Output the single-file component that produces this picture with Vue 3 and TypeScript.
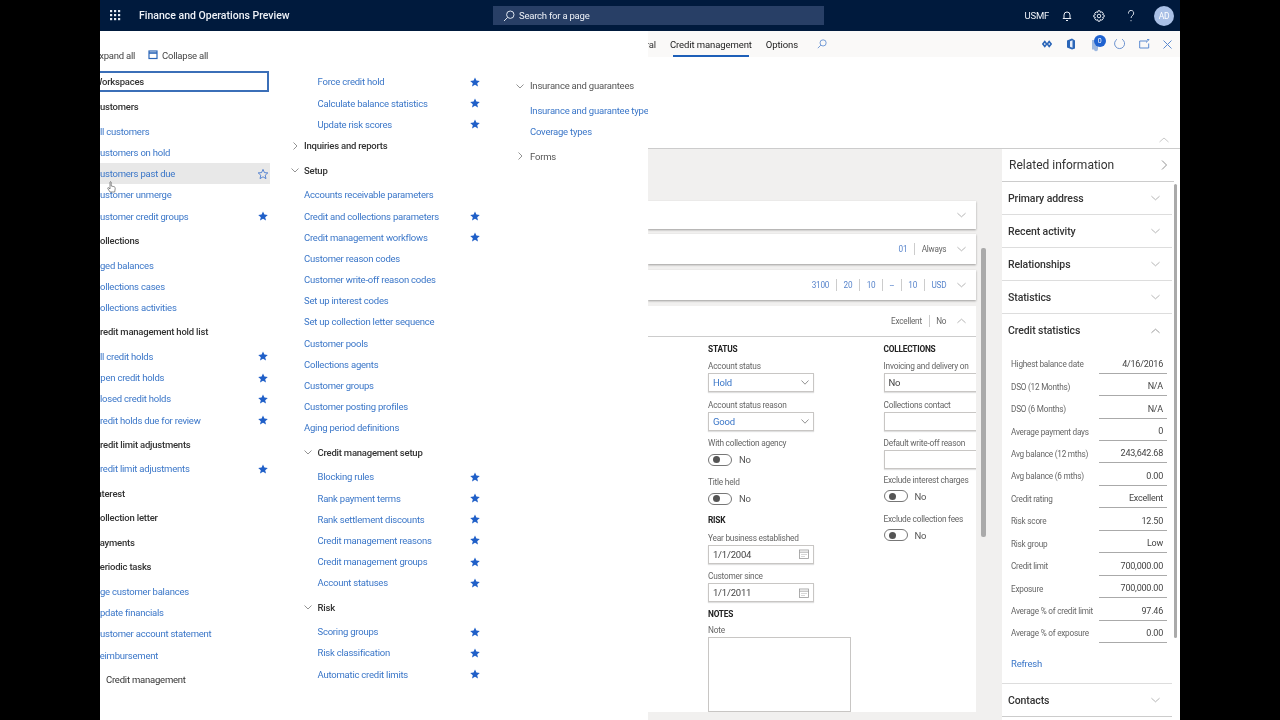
<script setup lang="ts">
type Row = { t: string; k: string; star?: boolean; chev?: string; tight?: boolean; hover?: boolean }
const L = (t: string, star = false): Row => ({ t, k: 'link', star })
const S = (t: string, star = true): Row => ({ t, k: 'link sub', star })
const H = (t: string, chev?: string, tight = false): Row => ({ t, k: 'head', chev, tight })
const SH = (t: string, chev?: string): Row => ({ t, k: 'head subh', chev })

const col1: Row[] = [
  H('Customers'), L('All customers'), L('Customers on hold'),
  { t: 'Customers past due', k: 'link', hover: true },
  L('Customer unmerge'), L('Customer credit groups', true),
  H('Collections'), L('Aged balances'), L('Collections cases'), L('Collections activities'),
  H('Credit management hold list'), L('All credit holds', true), L('Open credit holds', true),
  L('Closed credit holds', true), L('Credit holds due for review', true),
  H('Credit limit adjustments'), L('Credit limit adjustments', true),
  H('Interest'), H('Collection letter'), H('Payments'), H('Periodic tasks'),
  L('Age customer balances'), L('Update financials'), L('Customer account statement'), L('Reimbursement'),
]
const col2: Row[] = [
  S('Force credit hold'), S('Calculate balance statistics'), S('Update risk scores'),
  H('Inquiries and reports', 'r', true), H('Setup', 'd'),
  L('Accounts receivable parameters'), L('Credit and collections parameters', true),
  L('Credit management workflows', true), L('Customer reason codes'), L('Customer write-off reason codes'),
  L('Set up interest codes'), L('Set up collection letter sequence'), L('Customer pools'),
  L('Collections agents'), L('Customer groups'), L('Customer posting profiles'), L('Aging period definitions'),
  SH('Credit management setup', 'd'),
  S('Blocking rules'), S('Rank payment terms'), S('Rank settlement discounts'),
  S('Credit management reasons'), S('Credit management groups'), S('Account statuses'),
  SH('Risk', 'd'), S('Scoring groups'), S('Risk classification'), S('Automatic credit limits'),
]
const col3: Row[] = [
  H('Insurance and guarantees', 'd'), L('Insurance and guarantee types'), L('Coverage types'), H('Forms', 'r'),
]
const panes = ['Primary address', 'Recent activity', 'Relationships', 'Statistics']
const stats: [string, string][] = [
  ['Highest balance date', '4/16/2016'], ['DSO (12 Months)', 'N/A'], ['DSO (6 Months)', 'N/A'],
  ['Average payment days', '0'], ['Avg balance (12 mths)', '243,642.68'], ['Avg balance (6 mths)', '0.00'],
  ['Credit rating', 'Excellent'], ['Risk score', '12.50'], ['Risk group', 'Low'],
  ['Credit limit', '700,000.00'], ['Exposure', '700,000.00'],
  ['Average % of credit limit', '97.46'], ['Average % of exposure', '0.00'],
]
const addr = ['3100', '20', '10', '--', '10', 'USD']
const star = 'M5 .4l1.4 3.2 3.4.3-2.6 2.3.8 3.4L5 7.8 2 9.6l.8-3.4L.2 3.9l3.4-.3z'
</script>

<template>
  <div class="frame">
    <header class="top">
      <svg class="waffle" width="11" height="11" viewBox="0 0 11 11" fill="#e8edf5">
        <template v-for="x in [0, 4, 8]" :key="x">
          <rect v-for="y in [0, 4, 8]" :key="y" :x="x" :y="y" width="2.2" height="2.2" />
        </template>
      </svg>
      <span class="brand">Finance and Operations Preview</span>
      <div class="search">
        <svg width="12" height="12" viewBox="0 0 12 12" fill="none" stroke="#dfe6f0" stroke-width="1"><circle cx="7.3" cy="4.7" r="3.7" /><path d="M4.6 7.4L1 11" /></svg>
        <span>Search for a page</span>
      </div>
      <div class="topright">
        <span class="co">USMF</span>
        <svg width="12" height="12" viewBox="0 0 12 12" fill="none" stroke="#e8edf5"><path d="M3 8.5V5a3 3 0 016 0v3.5zM1.8 8.5h8.4M5 10.5h2" /></svg>
        <svg width="12" height="12" viewBox="0 0 12 12" fill="none" stroke="#e8edf5"><circle cx="6" cy="6" r="1.8" /><path d="M5 .8h2l.4 1.6 1.5-.6 1.4 1.4-.7 1.4 1.6.5v1.8l-1.6.5.7 1.4-1.4 1.4-1.5-.6-.4 1.6H5l-.4-1.6-1.5.6-1.4-1.4.7-1.4L.8 7V5.2l1.6-.5-.7-1.4 1.4-1.4 1.5.6z" /></svg>
        <svg width="12" height="12" viewBox="0 0 12 12" fill="none" stroke="#e8edf5"><path d="M3.5 3.5a2.6 2.6 0 115 .4c0 1.5-2.4 1.9-2.4 4M6 10.2v1" /></svg>
        <span class="avatar">AD</span>
      </div>
    </header>

    <div class="body">
      <nav class="nav">
        <div class="tools">
          <span class="expand">Expand all</span>
          <svg width="10" height="10" viewBox="0 0 10 10" fill="none" stroke="#2b66b8" stroke-width="1.2"><rect x="1" y="1" width="8" height="7.5" /><path d="M1 3h8" stroke-width="1.6" /></svg>
          <span>Collapse all</span>
        </div>
        <div class="cols">
          <div class="col col1">
            <div class="ws"><span class="out">Workspaces</span></div>
            <div v-for="r in col1" :key="r.t" class="row" :class="[r.k, { hover: r.hover }]">
              <span class="out">{{ r.t }}</span>
              <svg v-if="r.star || r.hover" class="star" width="10" height="10" viewBox="0 0 10 10" :fill="r.hover ? 'none' : '#1f5fc8'" stroke="#1f5fc8" :stroke-width="r.hover ? 0.7 : 0"><path :d="star" /></svg>
              <svg v-if="r.hover" class="hand" width="9" height="12" viewBox="0 0 9 12" fill="#fff" stroke="#444" stroke-width=".6"><path d="M3 1c.5-.6 1.200-.3 1.200.4V5l2.600.6c1 .2 1.600 1 1.400 2L7.700 11H3L.8 7.600c-.4-.7.3-1.300.9-.8L3 8z" /></svg>
            </div>
            <div class="row head last">Credit management</div>
          </div>
          <div class="col col2">
            <div v-for="r in col2" :key="r.t" class="row" :class="[r.k, { tight: r.tight }]">
              <svg v-if="r.chev" class="chev" width="8" height="8" viewBox="0 0 8 8" fill="none" stroke="#777" stroke-width=".8"><path :d="r.chev === 'r' ? 'M2.5 .5L6 4 2.5 7.5' : 'M.5 2.5L4 6l3.5-3.5'" /></svg>
              <span>{{ r.t }}</span>
              <svg v-if="r.star" class="star" width="10" height="10" viewBox="0 0 10 10" fill="#1f5fc8"><path :d="star" /></svg>
            </div>
          </div>
          <div class="col col3">
            <div v-for="r in col3" :key="r.t" class="row" :class="r.k">
              <svg v-if="r.chev" class="chev" width="8" height="8" viewBox="0 0 8 8" fill="none" stroke="#777" stroke-width=".8"><path :d="r.chev === 'r' ? 'M2.5 .5L6 4 2.5 7.5' : 'M.5 2.5L4 6l3.5-3.5'" /></svg>
              <span>{{ r.t }}</span>
            </div>
          </div>
        </div>
      </nav>

      <main class="main">
        <div class="actions">
          <div class="tabs">
            <span class="tab-clip"><span>General</span></span>
            <span class="tab on">Credit management</span>
            <span class="tab">Options</span>
            <svg class="tabsearch" width="10" height="10" viewBox="0 0 12 12" fill="none" stroke="#5b8ad0"><circle cx="7.3" cy="4.7" r="3.7" /><path d="M4.6 7.4L1 11" /></svg>
          </div>
          <div class="acticons">
            <svg width="10" height="8" viewBox="0 0 10 8" fill="none" stroke="#2b66b8" stroke-width="1.6"><path d="M2.8 1.5L.9 4l1.9 2.5L4.7 4zM7.2 1.5L5.3 4l1.9 2.5L9.1 4z" /></svg>
            <svg class="office" width="10" height="12" viewBox="0 0 10 12"><path d="M6 .5L1 2.500v7l5 2 3-1v-8z" fill="#2b66b8" /><path d="M4 3.200L6.500 2.300v7.400L4 8.800z" fill="#e7eefa" /></svg>
            <span class="chat">
              <svg width="12" height="15" viewBox="0 0 12 15"><path d="M2 3h6v9a2 2 0 01-4 .5H2z" fill="#9db8e0" /></svg>
              <b>0</b>
            </span>
            <svg width="12" height="12" viewBox="0 0 12 12" fill="none" stroke="#6c93d0"><path d="M4 1.300a5 5 0 105-.1" /></svg>
            <svg width="11" height="10" viewBox="0 0 11 10" fill="none" stroke="#5b8ad0"><path d="M8 2H.7v7h9V4.500M7 3.500L10 .6M8 .6h2.300" /></svg>
            <svg width="9" height="9" viewBox="0 0 9 9" fill="none" stroke="#5b8ad0"><path d="M.5.500l8 8M8.500.500l-8 8" /></svg>
          </div>
        </div>
        <div class="banner">
          <svg width="10" height="6" viewBox="0 0 10 6" fill="none" stroke="#bbb" stroke-width=".8"><path d="M.5 5L5 1l4.500 4" /></svg>
        </div>
        <div class="content">
          <div class="area">
            <section class="card c1"><svg class="cv" width="9" height="6" viewBox="0 0 10 6" fill="none" stroke="#999" stroke-width=".8"><path d="M.5 1L5 5l4.500-4" /></svg></section>
            <section class="card">
              <span class="sum blue">01</span><span class="sum">Always</span>
              <svg class="cv" width="9" height="6" viewBox="0 0 10 6" fill="none" stroke="#999" stroke-width=".8"><path d="M.5 1L5 5l4.500-4" /></svg>
            </section>
            <section class="card">
              <span v-for="(a, i) in addr" :key="i" class="sum blue">{{ a }}</span>
              <svg class="cv" width="9" height="6" viewBox="0 0 10 6" fill="none" stroke="#999" stroke-width=".8"><path d="M.5 1L5 5l4.500-4" /></svg>
            </section>
            <section class="card open">
              <div class="openhead">
                <span class="sum">Excellent</span><span class="sum">No</span>
                <svg class="cv" width="9" height="6" viewBox="0 0 10 6" fill="none" stroke="#999" stroke-width=".8"><path d="M.5 5L5 1l4.500 4" /></svg>
              </div>
              <div class="form">
                <div class="fc1">
                  <h4>STATUS</h4>
                  <label>Account status</label>
                  <div class="ctl blue">Hold<svg width="8" height="5" viewBox="0 0 8 5" fill="none" stroke="#777" stroke-width=".8"><path d="M.5.500L4 4.200 7.500.500" /></svg></div>
                  <label>Account status reason</label>
                  <div class="ctl blue">Good<svg width="8" height="5" viewBox="0 0 8 5" fill="none" stroke="#777" stroke-width=".8"><path d="M.5.500L4 4.200 7.500.500" /></svg></div>
                  <label>With collection agency</label>
                  <div class="tg"><i></i><span>No</span></div>
                  <label>Title held</label>
                  <div class="tg"><i></i><span>No</span></div>
                  <h4 class="risk">RISK</h4>
                  <label>Year business established</label>
                  <div class="ctl">1/1/2004<svg width="10" height="10" viewBox="0 0 10 10" fill="none" stroke="#999" stroke-width=".8"><rect x=".5" y="1" width="9" height="8.500" /><path d="M.5 3.200h9M2.500 5.500h1M4.500 5.500h1M6.500 5.500h1M2.500 7.500h1M4.500 7.500h1" /></svg></div>
                  <label>Customer since</label>
                  <div class="ctl">1/1/2011<svg width="10" height="10" viewBox="0 0 10 10" fill="none" stroke="#999" stroke-width=".8"><rect x=".5" y="1" width="9" height="8.500" /><path d="M.5 3.200h9M2.500 5.500h1M4.500 5.500h1M6.500 5.500h1M2.500 7.500h1M4.500 7.500h1" /></svg></div>
                  <h4 class="notes">NOTES</h4>
                  <label class="notel">Note</label>
                  <div class="note"></div>
                </div>
                <div class="fc2">
                  <h4>COLLECTIONS</h4>
                  <label class="clip">Invoicing and delivery on hold</label>
                  <div class="ctl wide">No</div>
                  <label>Collections contact</label>
                  <div class="ctl wide"></div>
                  <label>Default write-off reason</label>
                  <div class="ctl wide"></div>
                  <label class="ex">Exclude interest charges</label>
                  <div class="tg"><i></i><span>No</span></div>
                  <label class="ex2">Exclude collection fees</label>
                  <div class="tg"><i></i><span>No</span></div>
                </div>
              </div>
            </section>
            <div class="scroll1"></div>
          </div>
          <aside class="side">
            <div class="sidehead"><span>Related information</span><svg width="6" height="10" viewBox="0 0 6 10" fill="none" stroke="#777" stroke-width=".8"><path d="M1 .5L5.500 5 1 9.500" /></svg></div>
            <div v-for="p in panes" :key="p" class="pane"><span>{{ p }}</span><svg width="9" height="6" viewBox="0 0 10 6" fill="none" stroke="#999" stroke-width=".8"><path d="M.5 1L5 5l4.500-4" /></svg></div>
            <div class="pane noline"><span>Credit statistics</span><svg width="9" height="6" viewBox="0 0 10 6" fill="none" stroke="#777" stroke-width=".8"><path d="M.5 5L5 1l4.500 4" /></svg></div>
            <div class="stats">
              <div v-for="s in stats" :key="s[0]" class="stat"><span>{{ s[0] }}</span><b>{{ s[1] }}</b></div>
              <a class="refresh">Refresh</a>
            </div>
            <div class="pane contacts"><span>Contacts</span><svg width="9" height="6" viewBox="0 0 10 6" fill="none" stroke="#999" stroke-width=".8"><path d="M.5 1L5 5l4.500-4" /></svg></div>
            <div class="scroll2"></div>
          </aside>
        </div>
      </main>
    </div>
  </div>
</template>

<style>
html, body { background: #000; margin: 0; }
</style>

<style scoped>
.frame { width: 1080px; height: 720px; margin: 0 auto; background: #fff; overflow: hidden; display: flex; flex-direction: column; font-family: Roboto, "Liberation Sans", sans-serif; font-size: 9.5px; letter-spacing: -.22px; color: #333; filter: blur(.35px); }
.top { height: 31px; flex: none; background: #001a3d; display: flex; align-items: center; color: #eef2f8; }
.waffle { margin-left: 10px; }
.brand { margin-left: 18px; font-size: 10.5px; font-weight: 500; letter-spacing: 0; width: 354px; flex: none; white-space: nowrap; }
.search { width: 331px; height: 19px; background: #283f66; display: flex; align-items: center; gap: 4px; padding-left: 10px; box-sizing: border-box; }
.topright { margin-left: auto; display: flex; align-items: center; gap: 20px; padding-right: 6px; }
.co { font-size: 9.5px; margin-right: -8px; }
.avatar { width: 20px; height: 20px; border-radius: 50%; background: #a9c0e6; color: #fff; font-size: 8.5px; display: flex; align-items: center; justify-content: center; margin-left: -3px; }
.body { flex: 1; display: flex; min-height: 0; }
.nav { width: 548px; flex: none; overflow: hidden; padding-top: 14px; box-sizing: border-box; }
.tools { height: 20px; display: flex; align-items: center; margin-bottom: 6.4px; color: #444; }
.expand { margin-left: -6px; width: 54px; flex: none; }
.tools svg { margin-right: 4px; }
.cols { display: flex; align-items: flex-start; }
.col { flex: none; }
.col1 { width: 170px; }
.col2 { width: 195px; margin-left: 20px; }
.col3 { width: 133px; margin-left: 30px; padding-top: 2.25px; overflow: hidden; }
.row { display: flex; align-items: center; white-space: nowrap; position: relative; }
.link { height: 21.2px; color: #3a76c8; }
.head { height: 24.5px; color: #333; font-weight: 500; }
.link + .head, .head + .link { margin-top: 1.65px; }
.head.tight { margin-top: -1.35px; }
.out { margin-left: -6px; }
.ws { height: 21px; box-sizing: border-box; border: 2px solid #3b6fb8; border-left: 0; margin-right: 1.5px; display: flex; align-items: center; margin-bottom: 2.25px; font-weight: 500; }
.col1 .star { position: absolute; left: 158px; top: 50%; margin-top: -5px; }
.hover { background: #e8e8e8; }
.hand { position: absolute; left: 6.5px; top: 18px; z-index: 1; }
.last { padding-left: 6px; font-weight: 400; }
.col2 .row, .col3 .row { padding-left: 14px; }
.col2 .sub { padding-left: 27.5px; }
.col2 .subh { padding-left: 27.5px; }
.col3 .row { padding-left: 15px; color: #3a76c8; }
.col3 .head { color: #555; font-weight: 400; }
.col2 .star { position: absolute; left: 180px; top: 50%; margin-top: -5px; }
.chev { position: absolute; left: 1px; top: 50%; margin-top: -4px; }
.subh .chev { left: 14px; }
.main { flex: 1; min-width: 0; display: flex; flex-direction: column; }
.actions { height: 26px; flex: none; background: #faf9f8; display: flex; align-items: center; justify-content: space-between; }
.tabs { display: flex; align-items: center; height: 100%; letter-spacing: -.1px; padding-top: 1px; box-sizing: border-box; }
.tab-clip { width: 8px; overflow: hidden; display: flex; justify-content: flex-end; white-space: nowrap; margin-right: 14px; }
.tab { height: 100%; display: flex; align-items: center; position: relative; color: #222; margin-right: 14px; }
.tabsearch { margin-left: 5px; margin-top: -2px; }
.tab.on::after { content: ""; position: absolute; left: 3px; right: 3px; bottom: .5px; height: 2px; background: #1d5fb8; }
.acticons { display: flex; align-items: center; gap: 13.5px; padding-right: 8px; }
.office { margin-left: 1px; }
.chat { position: relative; width: 12px; height: 15px; margin-right: -2px; }
.chat b { position: absolute; left: 4px; top: -2px; width: 12px; height: 12px; border-radius: 50%; background: #1f62d0; color: #fff; font-size: 7px; font-weight: 400; display: flex; align-items: center; justify-content: center; }
.banner { height: 92px; flex: none; box-sizing: border-box; border-bottom: 1px solid #ccc; background: #fff; display: flex; align-items: flex-end; justify-content: flex-end; padding: 0 11px 5px 0; }
.content { flex: 1; display: flex; min-height: 0; }
.area { flex: 1; min-width: 0; background: #f1f0ef; padding: 52px 26px 0 0; position: relative; display: flex; flex-direction: column; overflow: hidden; }
.card { background: #fff; box-shadow: 0 1px 2px rgba(0, 0, 0, .35); height: 30px; margin-bottom: 6px; flex: none; display: flex; align-items: center; justify-content: flex-end; padding-right: 10px; color: #666; font-size: 8.2px; }
.card.c1 { height: 28px; margin-bottom: 5px; }
.cv { margin-left: 4px; }
.sum { padding: 0 6.7px; border-left: 1px solid #ccc; line-height: 12px; }
section > .sum:first-of-type, .openhead > .sum:first-of-type { border-left: 0; }
.sum.blue { color: #5a86cc; }
.card.open { height: 406px; display: block; padding: 0; box-shadow: none; margin: 0; overflow: hidden; }
.openhead { height: 30px; display: flex; align-items: center; justify-content: flex-end; padding-right: 10px; border-bottom: 1px solid #ccc; }
.form { display: flex; padding: 6px 0 0 60px; font-size: 8.3px; color: #666; }
.fc1 { width: 175.5px; flex: none; }
.fc2 { flex: 1; white-space: nowrap; }
h4 { margin: 0 0 4px; font-size: 8.3px; font-weight: 700; color: #222; height: 12px; line-height: 12px; }
label { display: block; height: 14px; line-height: 14px; white-space: nowrap; }
label.clip { width: 87.5px; overflow: hidden; }
.ctl { width: 106px; height: 19px; box-sizing: border-box; border: 1px solid #c8c6c4; box-shadow: 0 1px 1px rgba(0, 0, 0, .12); padding: 0 4px; margin-bottom: 5.5px; display: flex; align-items: center; justify-content: space-between; font-size: 9.5px; color: #444; }
.ctl.blue { color: #3a76c8; }
.ctl.wide { width: 130px; }
.tg { height: 19.5px; margin-bottom: 5.5px; display: flex; align-items: center; font-size: 9.5px; gap: 7px; color: #555; }
.tg i { width: 24px; height: 12px; border: 1px solid #777; border-radius: 7px; box-sizing: border-box; position: relative; }
.tg i::after { content: ""; position: absolute; left: 4px; top: 1.5px; width: 7px; height: 7px; border-radius: 50%; background: #555; }
.risk { margin: 0 0 4.5px; }
.notes { margin: 3px 0 3px; }
.note { width: 143px; height: 75.5px; box-sizing: border-box; border: 1px solid #c8c6c4; }
.ex { margin-top: -2px; }
.ex2 { margin-top: 2px; }
.scroll1 { position: absolute; left: 333px; top: 99px; width: 5px; height: 289px; background: #aaa; border-radius: 2px; }
.side { width: 178px; flex: none; background: #fff; position: relative; overflow: hidden; }
.sidehead { height: 33px; box-sizing: border-box; display: flex; align-items: center; justify-content: space-between; padding: 0 7px 0 7px; border-bottom: 1px solid #ccc; margin-right: 6px; font-size: 12px; letter-spacing: 0; color: #333; }
.pane { height: 33px; box-sizing: border-box; display: flex; align-items: center; justify-content: space-between; padding: 0 12px 0 6px; border-bottom: 1px solid #ddd; margin-right: 8px; font-size: 10.5px; letter-spacing: -.1px; font-weight: 500; color: #333; }
.pane svg { margin-right: .5px; }
.noline { border-bottom: 0; }
.stats { padding: 6px 12px 0 9px; font-size: 8.2px; color: #666; height: 337px; box-sizing: border-box; border-bottom: 1px solid #ddd; margin-right: 8px; }
.stat { height: 22.45px; display: flex; justify-content: space-between; align-items: center; position: relative; white-space: nowrap; }
.stat b { font-weight: 400; color: #444; font-size: 9px; width: 68px; flex: none; box-sizing: border-box; text-align: right; padding-right: 4px; border-bottom: 1px solid #aaa; margin-right: -7px; height: 19px; line-height: 19px; }
.refresh { display: block; margin-top: 9px; color: #3a76c8; font-size: 9.5px; height: 20px; line-height: 20px; }
.contacts { border-bottom: 1px solid #ccc; }
.scroll2 { position: absolute; left: 172px; top: 35px; width: 3px; height: 454px; background: #aaa; border-radius: 2px; }
</style>
